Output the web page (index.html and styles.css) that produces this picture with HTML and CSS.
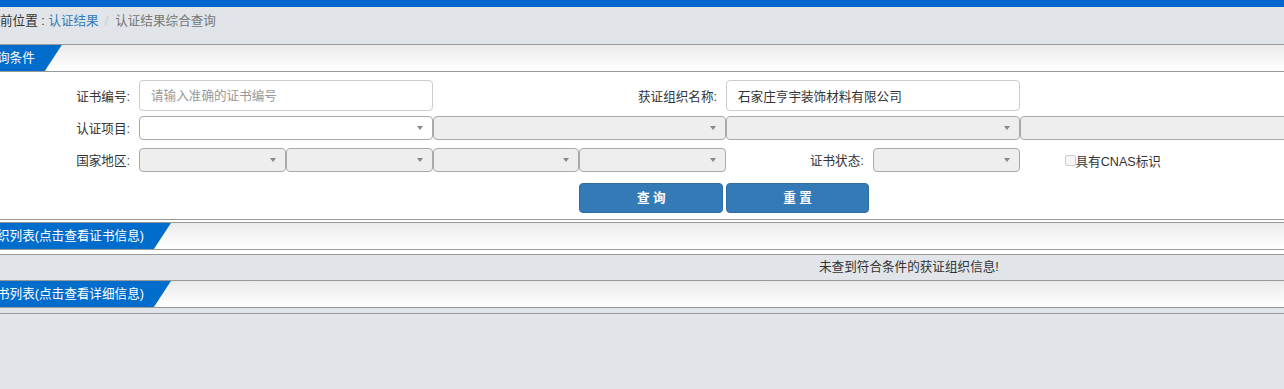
FILE: index.html
```html
<!doctype html>
<html>
    <head>
        <meta charset="utf-8">
        <link rel="stylesheet" href="styles.css">
    </head>
    <body>
        <div class="topbar"></div>
        <div class="crumb">
            当前位置 : <a href="#">认证结果</a><span class="sep">/</span><span class="active">认证结果综合查询</span>
        </div>

        <div class="main">
            <div class="panel">
                <div class="panel-hd"><span class="tab">查询条件</span></div>
                <div class="form">
                    <div class="frow row-tall">
                        <label class="lbl">证书编号:</label>
                        <input class="txt span2" type="text" placeholder="请输入准确的证书编号">
                        <label class="lbl span2">获证组织名称:</label>
                        <input class="txt span2" type="text" value="石家庄亨宇装饰材料有限公司">
                    </div>
                    <div class="frow row-sel">
                        <label class="lbl">认证项目:</label>
                        <span class="sel span2 open"></span>
                        <span class="sel span2"></span>
                        <span class="sel span2"></span>
                        <span class="sel span2 noarrow"></span>
                    </div>
                    <div class="frow row-sel row3">
                        <label class="lbl">国家地区:</label>
                        <span class="sel"></span>
                        <span class="sel"></span>
                        <span class="sel"></span>
                        <span class="sel"></span>
                        <label class="lbl">证书状态:</label>
                        <span class="sel"></span>
                        <label class="check span2"><input type="checkbox" disabled>具有CNAS标识</label>
                    </div>
                    <div class="frow row-btn">
                        <button class="btn">查 询</button>
                        <button class="btn">重 置</button>
                    </div>
                </div>
            </div>

            <div class="panel panel-list">
                <div class="panel-hd"><span class="tab">组织列表(点击查看证书信息)</span></div>
                <div class="msg">未查到符合条件的获证组织信息!</div>
            </div>

            <div class="panel-hd"><span class="tab">证书列表(点击查看详细信息)</span></div>
        </div>
        <div class="empty"></div>
    </body>
</html>
```

FILE: styles.css
```css
html, body {
    margin: 0;
    height: 100%;
}

body {
    background: #e1e5e9;
    color: #333;
    font-family: "Liberation Sans", "Noto Sans CJK SC", sans-serif;
    font-size: 12.6px;
    overflow: hidden;
}

.topbar {
    height: 7px;
    background: #0068cc;
}

.crumb {
    height: 32px;
    padding-top: 5px;
    line-height: 18px;
    margin-left: -12.6px;
    white-space: nowrap;
}

.crumb a {
    color: #337ab7;
    text-decoration: none;
}

.crumb .sep {
    color: #ccc;
    padding: 0 7px 0 6px;
}

.crumb .active {
    color: #777;
}

.main {
    background: #fff;
}

.panel {
    border-top: 1px solid #999;
}

.panel-hd {
    height: 26px;
    border-bottom: 1px solid #999;
    background: linear-gradient(#ebebeb, #fff);
    overflow: hidden;
}

.tab {
    display: inline-block;
    height: 26px;
    line-height: 26px;
    margin-left: -15.6px;
    padding-right: 27px;
    color: #fff;
    background: #006ccc;
    clip-path: polygon(0 0, 100% 0, calc(100% - 17px) 100%, 0 100%);
    white-space: nowrap;
}

/* query form */
.form {
    height: 133px;
    padding: 8px 0 6px;
    border-bottom: 1px solid #999;
    overflow: hidden;
}

.frow {
    display: grid;
    grid-template-columns: 139px repeat(8, 146.75px);
    width: 1313px;
}

.row-tall {
    height: 31px;
}

.row-sel {
    height: 24px;
    margin-top: 5px;
}

.row3 {
    margin-top: 8px;
}

.row-btn {
    height: 30px;
    margin-top: 11px;
}

.span2 {
    grid-column: span 2;
}

.lbl {
    text-align: right;
    padding-right: 9px;
    padding-bottom: 1px;
    align-self: center;
    white-space: nowrap;
}

.txt {
    box-sizing: border-box;
    width: 100%;
    height: 31px;
    margin: 0;
    padding: 0 11px;
    border: 1px solid #ccc;
    border-radius: 4px;
    font: inherit;
    color: #333;
    outline: none;
}

.txt::placeholder {
    color: #999;
}

.sel {
    position: relative;
    box-sizing: border-box;
    height: 24px;
    border: 1px solid #aaa;
    border-radius: 4px;
    background: #eee;
}

.sel.open {
    background: #fff;
}

.sel::after {
    content: "";
    position: absolute;
    right: 9px;
    top: 9px;
    border-top: 4px solid #888;
    border-left: 3px solid transparent;
    border-right: 3px solid transparent;
}

.sel.noarrow::after {
    display: none;
}

.check {
    display: flex;
    align-items: center;
    padding-left: 45px;
    white-space: nowrap;
}

.check input {
    appearance: none;
    box-sizing: border-box;
    width: 11px;
    height: 11px;
    margin: 0;
    border: 1px solid #ccc;
    border-radius: 2px;
    background: #f6f6f6;
}

.btn {
    grid-column-start: 5;
    box-sizing: border-box;
    width: 144px;
    height: 30px;
    padding: 0 0 3px;
    border: 1px solid #2e6da4;
    border-radius: 4px;
    background: #337ab7;
    color: #fff;
    font: inherit;
    font-weight: bold;
}

.btn + .btn {
    grid-column-start: 6;
    width: 143px;
}

/* result lists */
.panel-list {
    margin-top: 2px;
}

.msg {
    height: 25px;
    line-height: 24px;
    margin-top: 4px;
    padding-left: 819px;
    border-top: 1px solid #999;
    border-bottom: 1px solid #999;
    background: #e1e5e9;
    white-space: nowrap;
}

.empty {
    margin-top: 5px;
    border-top: 1px solid #999;
}
```
